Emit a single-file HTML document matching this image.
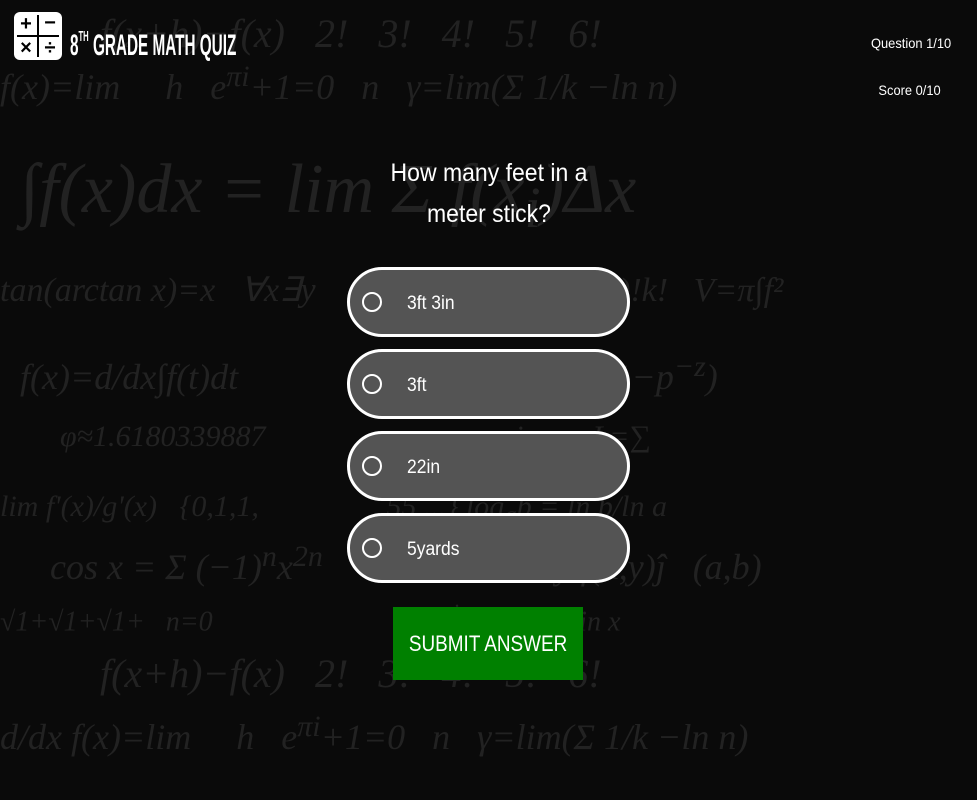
<!DOCTYPE html>
<html><head><style>
body{margin:0;width:977px;height:800px;background:#0a0a0a;overflow:hidden;position:relative;font-family:"Liberation Sans",sans-serif;color:#fff}
.bg{position:absolute;color:#222;font-family:"Liberation Serif",serif;font-style:italic;white-space:nowrap}
.logo{position:absolute;left:14px;top:12px;width:48px;height:48px;background:#fff;border-radius:6px}
.logo div{position:absolute;width:22px;height:22px;color:#000;font-size:20px;font-weight:bold;text-align:center;line-height:22px}
.title{position:absolute;left:70px;top:29px;font-weight:bold;font-size:30px;transform:scaleX(.51);transform-origin:left;white-space:nowrap}
.title sup{font-size:15px;vertical-align:top;line-height:16px}
.info{position:absolute;right:26px;font-size:14px;text-align:right;transform:scaleX(.92);transform-origin:right}
.q{position:absolute;left:289px;width:400px;top:153px;text-align:center;font-size:25px;line-height:41px;transform:scaleX(.92)}
.opt{position:absolute;left:347px;width:277px;height:64px;border:3px solid #fff;border-radius:35px;background:#545454;box-sizing:content-box}
.opt .r{position:absolute;left:12px;top:22px;width:16px;height:16px;border:2px solid #fff;border-radius:50%}
.opt span{position:absolute;left:57px;top:23px;font-size:19px;transform:scaleX(.92);transform-origin:left}
.btn{position:absolute;left:393px;top:607px;width:190px;height:73px;background:#008000;font-size:22px;text-align:center;line-height:73px}
.btn span{display:inline-block;transform:scaleX(.86)}
</style></head><body>
<div class="bg" style="left:100px;top:10px;font-size:40px">f(x+h)−f(x)  &nbsp; 2! &nbsp; 3! &nbsp; 4! &nbsp; 5! &nbsp; 6!</div>
<div class="bg" style="left:0;top:60px;font-size:36px">f(x)=lim &nbsp; &nbsp; h &nbsp; e<sup>πi</sup>+1=0 &nbsp; n &nbsp; γ=lim(Σ 1/k −ln n)</div>
<div class="bg" style="left:20px;top:150px;font-size:70px">∫f(x)dx = lim Σ f(x<sub>i</sub>)Δx</div>
<div class="bg" style="left:0;top:270px;font-size:34px">tan(arctan x)=x &nbsp; ∀x∃y &nbsp; &nbsp; &nbsp; &nbsp; &nbsp; &nbsp; &nbsp; (n k) n!/(n−k)!k! &nbsp; V=π∫f²</div>
<div class="bg" style="left:20px;top:350px;font-size:36px">f(x)=d/dx∫f(t)dt &nbsp; &nbsp; &nbsp; &nbsp; &nbsp; &nbsp; &nbsp; &nbsp; &nbsp; Σ 1/n² = Π 1/(1−p<sup>−z</sup>)</div>
<div class="bg" style="left:60px;top:420px;font-size:30px">φ≈1.6180339887 &nbsp; &nbsp; &nbsp; &nbsp; &nbsp; &nbsp; &nbsp; &nbsp; &nbsp; &nbsp; &nbsp; &nbsp; p=primes &nbsp; L=∑</div>
<div class="bg" style="left:0;top:490px;font-size:30px">lim f'(x)/g'(x) &nbsp; {0,1,1, &nbsp; &nbsp; &nbsp; &nbsp; &nbsp; &nbsp; &nbsp; &nbsp; 55,...} log<sub>a</sub>b = ln b/ln a</div>
<div class="bg" style="left:50px;top:540px;font-size:36px">cos x = Σ (−1)<sup>n</sup>x<sup>2n</sup> &nbsp; &nbsp; &nbsp; &nbsp; &nbsp; &nbsp; &nbsp; &nbsp; î+∂/∂y f(x,y)ĵ &nbsp; (a,b)</div>
<div class="bg" style="left:0;top:600px;font-size:28px">√1+√1+√1+ &nbsp; n=0 &nbsp; &nbsp; &nbsp; &nbsp; &nbsp; &nbsp; &nbsp; &nbsp; &nbsp; &nbsp; &nbsp; &nbsp; &nbsp; &nbsp; &nbsp; e<sup>xi</sup>=cos x+i sin x</div>
<div class="bg" style="left:100px;top:650px;font-size:40px">f(x+h)−f(x) &nbsp; 2! &nbsp; 3! &nbsp; 4! &nbsp; 5! &nbsp; 6!</div>
<div class="bg" style="left:0;top:710px;font-size:36px">d/dx f(x)=lim &nbsp; &nbsp; h &nbsp; e<sup>πi</sup>+1=0 &nbsp; n &nbsp; γ=lim(Σ 1/k −ln n)</div>

<div class="logo">
<div style="left:1px;top:1px">+</div><div style="left:25px;top:0">−</div>
<div style="left:1px;top:25px">×</div><div style="left:25px;top:25px">÷</div>
<div style="left:23px;top:3px;width:2px;height:42px;background:#000"></div>
<div style="left:3px;top:23px;width:42px;height:2px;background:#000"></div>
</div>
<div class="title">8<sup>TH</sup> GRADE MATH QUIZ</div>
<div class="info" style="top:35px">Question 1/10</div>
<div class="info" style="top:82px;right:36px">Score 0/10</div>
<div class="q">How many feet in a<br>meter stick?</div>
<div class="opt" style="top:267px"><div class="r"></div><span>3ft 3in</span></div>
<div class="opt" style="top:349px"><div class="r"></div><span>3ft</span></div>
<div class="opt" style="top:431px"><div class="r"></div><span>22in</span></div>
<div class="opt" style="top:513px"><div class="r"></div><span>5yards</span></div>
<div class="btn"><span>SUBMIT ANSWER</span></div>
</body></html>
